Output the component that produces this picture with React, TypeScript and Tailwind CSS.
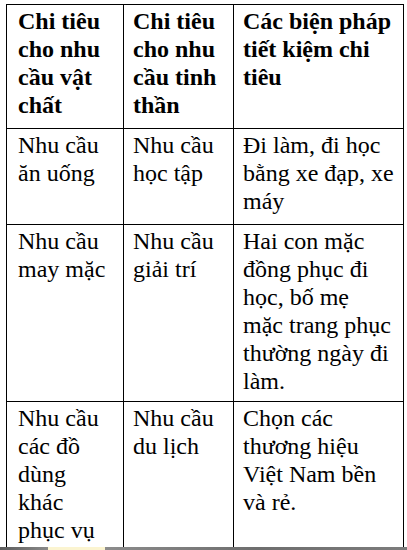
const header = [
    ["Chi tiêu", "cho nhu", "cầu vật", "chất"],
    ["Chi tiêu", "cho nhu", "cầu tinh", "thần"],
    ["Các biện pháp", "tiết kiệm chi", "tiêu"],
]

const rows = [
    {
        pb: "pb-[9px]",
        cells: [
            ["Nhu cầu", "ăn uống"],
            ["Nhu cầu", "học tập"],
            ["Đi làm, đi học", "bằng xe đạp, xe", "máy"],
        ],
    },
    {
        pb: "pb-[6px]",
        cells: [
            ["Nhu cầu", "may mặc"],
            ["Nhu cầu", "giải trí"],
            ["Hai con mặc", "đồng phục đi", "học, bố mẹ", "mặc trang phục", "thường ngày đi", "làm."],
        ],
    },
    {
        pb: "pb-[9px]",
        cells: [
            ["Nhu cầu", "các đồ", "dùng", "khác", "phục vụ", "đời sống"],
            ["Nhu cầu", "du lịch"],
            ["Chọn các", "thương hiệu", "Việt Nam bền", "và rẻ."],
        ],
    },
]

// left padding per column so text lands where it does in the document
const pads = ["pl-[11px]", "pl-[9px]", "pl-[9px]"]

const Cell = (props: { lines: string[], className: string }) => (
    <div className={`border-r border-b border-black pt-[2px] pr-[4px] ${props.className}`}>
        {props.lines.map((line, i) => (
            <div key={i} className="whitespace-nowrap">{line}</div>
        ))}
    </div>
)

export default function App() {
    return (
        <div className="h-[550px] w-[407px] flex flex-col bg-white overflow-hidden text-black">
            <div className="flex-1 overflow-hidden pl-[6px] pt-[4px]">
                <div className="grid grid-cols-[117px_110px_170px] w-[398px] border-t border-l border-black font-['Liberation_Serif'] text-[24px] leading-[28px]">
                    {header.map((lines, i) => (
                        <Cell key={i} lines={lines} className={`font-bold pb-[9px] ${pads[i]}`} />
                    ))}
                    {rows.map((row, r) =>
                        row.cells.map((lines, i) => (
                            <Cell key={`${r}-${i}`} lines={lines} className={`${row.pb} ${pads[i]}`} />
                        ))
                    )}
                </div>
            </div>
            <div className="h-[3px] flex shrink-0">
                <div className="w-[48px] bg-gradient-to-r from-[#5c5c5c] to-[#8a8a8a]" />
                <div className="w-[57px] bg-[#fbf4d0]" />
                <div className="flex-1 bg-gradient-to-r from-[#8c8c8c] via-[#6e6e6e] to-[#7c7c7c]" />
            </div>
        </div>
    )
}
